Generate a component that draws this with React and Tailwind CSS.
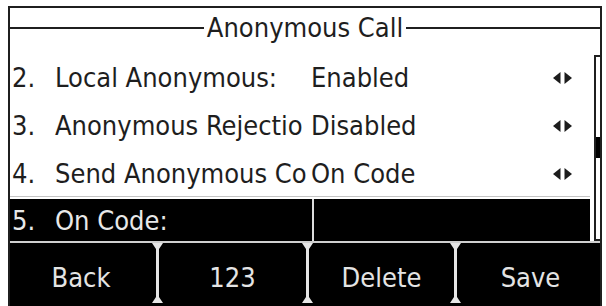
const rows = [
  { n: '2.', label: 'Local Anonymous:', value: 'Enabled' },
  { n: '3.', label: 'Anonymous Rejectio', value: 'Disabled' },
  { n: '4.', label: 'Send Anonymous Co', value: 'On Code' },
];

function Arrows() {
  return (
    <svg width="20" height="12" viewBox="0 0 20 12" className="block">
      <polygon points="0,6 7.5,0 7.5,12" fill="#1c1c1c" />
      <polygon points="11.5,0 19,6 11.5,12" fill="#1c1c1c" />
    </svg>
  );
}

function IBeam() {
  return (
    <svg width="11" height="60" viewBox="0 0 11 60" className="block shrink-0">
      <polygon
        points="0,0 11,0 7,6 7,54 11,60 0,60 4,54 4,6"
        fill="#e6e6e6"
      />
    </svg>
  );
}

export default function App() {
  return (
    <div className="w-[606px] h-[306px] bg-white overflow-hidden pl-[8px] pt-[6px] font-['DejaVu_Sans_Condensed','DejaVu_Sans',sans-serif] text-[27px] leading-[1.2] text-[#1e1e1e]">
      <div className="w-[594px] h-[300px] border-l-2 border-t-2 border-r-2 border-[#1f1f1f] flex flex-col">
        {/* header */}
        <div className="h-[40px] flex items-center shrink-0">
          <div className="flex-1 h-[2px] bg-[#1f1f1f]" />
          <span className="px-[3px] whitespace-nowrap">Anonymous Call</span>
          <div className="flex-1 h-[2px] bg-[#1f1f1f]" />
        </div>

        {/* body */}
        <div className="flex h-[193px] shrink-0">
          <div className="w-[580px] flex flex-col pt-[6px]">
            {rows.map((r, i) => (
              <div
                key={r.n}
                className={
                  i === 2
                    ? 'h-[47px] flex items-center border-b border-[#c4c4c4] shrink-0 pt-[3px]'
                    : 'h-[48px] flex items-center shrink-0'
                }
              >
                <div className="w-[301px] flex items-center pl-[2px] whitespace-nowrap">
                  <span className="w-[43px] shrink-0">{r.n}</span>
                  <span>{r.label}</span>
                </div>
                <div className="flex-1 flex items-center justify-between pr-[17px]">
                  <span className="whitespace-nowrap">{r.value}</span>
                  <Arrows />
                </div>
              </div>
            ))}
            <div className="h-[2px] shrink-0" />
            <div className="h-[44px] flex bg-black text-[#e8e8e8] shrink-0">
              <div className="w-[302px] flex items-center pl-[2px] whitespace-nowrap">
                <span className="w-[43px] shrink-0">5.</span>
                <span>On Code:</span>
              </div>
              <div className="w-[2px] bg-[#dcdcdc]" />
              <div className="flex-1" />
            </div>
          </div>
          <div className="w-[4px]" />
          <div className="w-[6px] mt-[7px] h-[186px] border-l-2 border-t-2 border-b-2 border-[#1f1f1f] bg-white pt-[80px]">
            <div className="h-[21px] bg-black" />
          </div>
        </div>

        {/* softkeys */}
        <div className="flex-1 bg-black border-t-2 border-[#cfcfcf] flex text-[#e4e4e4]">
          <div className="w-[142px] flex items-center justify-center pt-[8px]">Back</div>
          <IBeam />
          <div className="w-[139px] flex items-center justify-center pt-[8px]">123</div>
          <IBeam />
          <div className="w-[137px] flex items-center justify-center pt-[8px]">Delete</div>
          <IBeam />
          <div className="flex-1 flex items-center justify-center pt-[8px]">Save</div>
        </div>
      </div>
    </div>
  );
}
